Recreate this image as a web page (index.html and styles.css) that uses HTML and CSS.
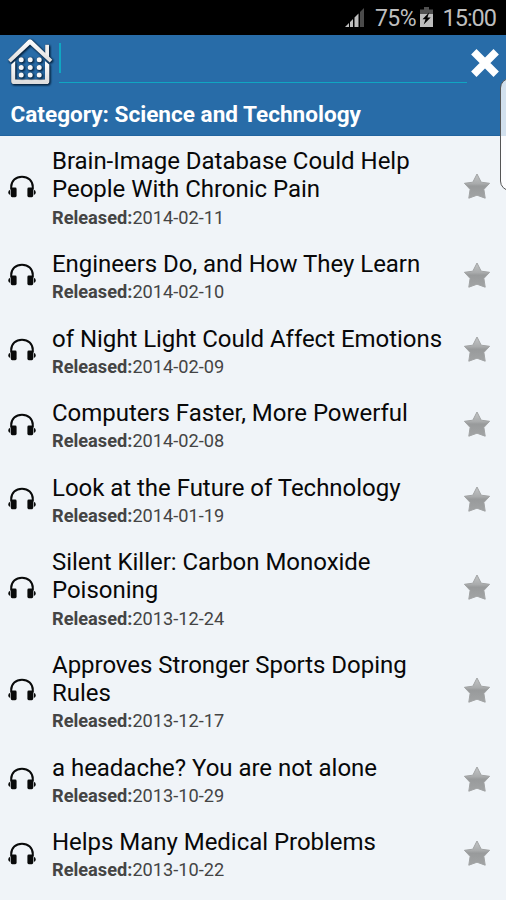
FILE: index.html
```html
<!DOCTYPE html>
<html lang="en">
<head>
<meta charset="utf-8">
<title>Science and Technology</title>
<link rel="stylesheet" href="styles.css">
</head>
<body>
<svg class="defs" width="0" height="0" aria-hidden="true">
  <defs>
    <linearGradient id="metal" x1="0" y1="0" x2="0" y2="1"><stop offset="0" stop-color="#fff"/><stop offset="1" stop-color="#dcdcdc"/></linearGradient>
    <linearGradient id="starFill" x1="0" y1="0" x2="0" y2="1"><stop offset="0" stop-color="#c4c6c7"/><stop offset=".4" stop-color="#a9abac"/><stop offset=".5" stop-color="#989a9b"/><stop offset="1" stop-color="#a2a4a5"/></linearGradient>
    <symbol id="phones" viewBox="0 0 28 24">
      <path d="M3.2 14.5V12C3.2 5.8 7.8 1.7 14 1.7S24.8 5.8 24.8 12v2.5" fill="none" stroke="#090a0a" stroke-width="2"/>
      <rect x="2.8" y="12.6" width="5.8" height="9.6" rx="1.4"/><rect x="19.4" y="12.6" width="5.8" height="9.6" rx="1.4"/>
      <path d="M2.2 14.8Q.2 15.5.2 17.4T2.2 20zM25.8 14.8q2 .7 2 2.6t-2 2.6z"/>
    </symbol>
    <symbol id="star" viewBox="0 0 28 27">
      <path d="M14 1L18.2 9.2L26.6 10.3L20.9 16.4L22.2 25.2L14 22.2L5.8 25.2L7.1 16.4L1.4 10.3L9.8 9.2Z" fill="url(#starFill)" stroke="#a2a4a5" stroke-width="1" stroke-linejoin="round"/>
    </symbol>
  </defs>
</svg>
<div class="screen">
  <div class="status">
    <svg class="signal" width="20" height="19" viewBox="0 0 20 19"><path d="M0 19L4 15V19zM5 14l3-3v8H5zM9.5 9.5l4-4V19h-4z" fill="#bebebe"/><path d="M15 4l4-4v19h-4z" fill="#4b4b4b"/></svg>
    <span class="percent">75%</span>
    <svg class="battery" width="13" height="20" viewBox="0 0 13 20"><path d="M4 0h5v2.5h4V7H0V2.5h4z" fill="#505050"/><path d="M0 7h13v13H0z" fill="#bebebe"/><path d="M9.3 5.3L2.5 12.2h3L3.7 17.4l7-7H7.4z" fill="#000"/></svg>
    <span class="clock">15:00</span>
  </div>
  <header class="header">
    <div class="search">
      <svg class="home" width="46" height="50" viewBox="7 36 46 50">
        <g class="home-shape">
          <path d="M45.2 44.8H49V58L45.2 54.5Z" fill="#eee"/>
          <path d="M11.2 64.5L15.2 61V79.6H45V61L49.3 64.5V81.2Q49.3 84 46.5 84H14Q11.2 84 11.2 81.2Z" fill="url(#metal)"/>
          <path d="M8 59.8L28.2 40.1Q30 38.5 31.8 40.1L52.3 59.8L49.7 62.6L30 44.6L10.7 62.6Z" fill="url(#metal)"/>
        </g>
        <g class="home-shape" fill="#f8f8f8"><circle cx="21.2" cy="59.8" r="2.5"/><circle cx="30.2" cy="59.8" r="2.5"/><circle cx="39.2" cy="59.8" r="2.5"/><circle cx="21.2" cy="67.4" r="2.5"/><circle cx="30.2" cy="67.4" r="2.5"/><circle cx="39.2" cy="67.4" r="2.5"/><circle cx="21.2" cy="75" r="2.5"/><circle cx="30.2" cy="75" r="2.5"/><circle cx="39.2" cy="75" r="2.5"/></g>
      </svg>
      <div class="field"><i class="caret"></i></div>
      <svg class="close" width="30" height="30" viewBox="0 0 30 30"><path d="M3.8 3.8l22.4 22.4M26.2 3.8L3.8 26.2" stroke="#fff" stroke-width="7.6"/></svg>
    </div>
    <h1 class="category">Category: Science and Technology</h1>
  </header>
  <main class="list" id="list"></main>
  <div class="edge-panel"></div>
</div>
<script src="app.js"></script>
</body>
</html>
```
FILE: styles.css
```css
* { box-sizing: border-box; }
body { margin: 0; font-family: Roboto, "Liberation Sans", sans-serif; background: #f0f4f8; }
.defs { position: absolute; }
.screen { position: relative; width: 506px; height: 900px; overflow: hidden; }
.status { height: 35px; background: #000; color: #bebebe; display: flex; padding-left: 345px; align-items: flex-start; }
.signal { margin-top: 8px; flex: none; }
.percent { margin-left: 10px; width: 41px; font-size: 23px; line-height: 37px; letter-spacing: -.6px; flex: none; }
.battery { margin: 7px 0 0 4px; flex: none; }
.clock { margin-left: 9.5px; font-size: 23.5px; line-height: 37px; letter-spacing: -1px; }
.header { height: 100.6px; background: #286ca8; border-bottom: 1px solid #21649f; }
.search { height: 59px; display: flex; align-items: flex-start; }
.home { margin: 1px 0 0 7px; flex: none; overflow: visible; }
.home-shape { filter: drop-shadow(1px 1px .8px #072440) drop-shadow(0 0 .6px #072440); }
.field { width: 408px; height: 48px; margin-left: 6px; padding-top: 8px; border-bottom: 1px solid #10a6c2; flex: none; }
.caret { display: block; width: 2px; height: 30px; background: #10a6c2; }
.close { margin: 13px 0 0 3px; flex: none; }
.category { margin: 0; padding: 8px 10.5px; font-size: 22.57px; line-height: 26px; font-weight: 700; color: #fff; white-space: nowrap; }
.row { display: grid; grid-template-columns: 52px 411px 28px; align-items: center; padding: 11.8px 0 10.6px; }
.phones { display: block; width: 28px; height: 24px; margin: 0 0 1.6px 8px; fill: #090a0a; }
.star { display: block; width: 28px; height: 27px; margin-bottom: 1.6px; }
.title { font-size: 24px; line-height: 28.1px; letter-spacing: -.03px; color: #080808; white-space: nowrap; }
.released { margin-top: 3px; font-size: 18.2px; line-height: 21.1px; color: #444; white-space: nowrap; }
.released b { font-weight: 700; }
.edge-panel { position: absolute; left: 500px; top: 78px; width: 24px; height: 113px; border: 1px solid #555; border-radius: 10px; background: linear-gradient(#d2e0ed 57px, #fdfdfe 57px); }
```
FILE: app.js
```js
const episodes = [
  [["Brain-Image Database Could Help", "People With Chronic Pain"], "2014-02-11"],
  [["Engineers Do, and How They Learn"], "2014-02-10"],
  [["of Night Light Could Affect Emotions"], "2014-02-09"],
  [["Computers Faster, More Powerful"], "2014-02-08"],
  [["Look at the Future of Technology"], "2014-01-19"],
  [["Silent Killer: Carbon Monoxide", "Poisoning"], "2013-12-24"],
  [["Approves Stronger Sports Doping", "Rules"], "2013-12-17"],
  [["a headache? You are not alone"], "2013-10-29"],
  [["Helps Many Medical Problems"], "2013-10-22"]
];
document.getElementById("list").innerHTML = episodes.map(([lines, date]) => `
  <article class="row">
    <svg class="phones"><use href="#phones"/></svg>
    <div>
      <div class="title">${lines.join("<br>")}</div>
      <div class="released"><b>Released:</b>${date}</div>
    </div>
    <svg class="star"><use href="#star"/></svg>
  </article>`).join("");
```
